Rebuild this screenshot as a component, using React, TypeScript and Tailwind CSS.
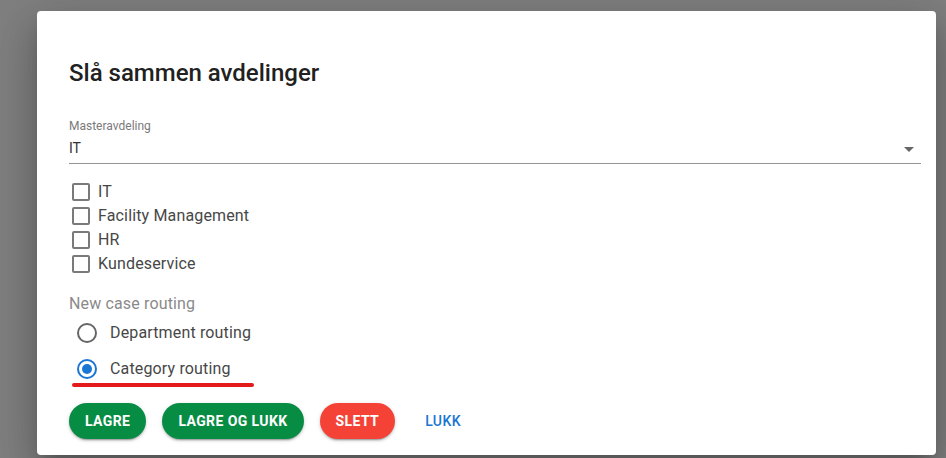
import React, { useState } from "react";

const departments = ["IT", "Facility Management", "HR", "Kundeservice"];

function Checkbox({ label }: { label: string }) {
  return (
    <label className="flex h-6 items-center text-[16px] tracking-[0.15px] text-[#474747]">
      <span className="ml-[3px] mr-[8px] block h-[18px] w-[18px] rounded-[2px] border-2 border-[#7a7a7a]" />
      {label}
    </label>
  );
}

function Radio({ label, checked }: { label: string; checked?: boolean }) {
  return (
    <div className="flex h-9 items-center text-[16px] tracking-[0.15px] text-[#474747]">
      <span
        className={`ml-[8px] mr-[13px] flex h-[20px] w-[20px] items-center justify-center rounded-full border-2 ${
          checked ? "border-[#1976d2]" : "border-[#666666]"
        }`}
      >
        {checked && <span className="block h-[10px] w-[10px] rounded-full bg-[#1976d2]" />}
      </span>
      {label}
    </div>
  );
}

const raised =
  "shadow-[0_3px_1px_-2px_rgba(0,0,0,0.2),0_2px_2px_0_rgba(0,0,0,0.14),0_1px_5px_0_rgba(0,0,0,0.12)]";

export default function App() {
  const [master] = useState("IT");

  return (
    <div
      className="h-[458px] w-full overflow-hidden bg-[#7f7f7f] pl-[37px] pt-[11px]"
      style={{ fontFamily: "Roboto, 'Liberation Sans', sans-serif" }}
    >
      <div className="h-[444px] w-[899px] rounded-[4px] bg-white pl-8 pr-4 pt-[46px] shadow-[0_11px_15px_-7px_rgba(0,0,0,0.2),0_24px_38px_3px_rgba(0,0,0,0.14),0_9px_46px_8px_rgba(0,0,0,0.12)]">
        {/* Title */}
        <h2 className="h-8 text-[24px] font-medium leading-8 text-[#212121]">
          Slå sammen avdelinger
        </h2>

        {/* Master select */}
        <div className="mt-[29px] w-[852px]">
          <div className="text-[12px] leading-4 text-[#7a7a7a]">Masteravdeling</div>
          <div className="mt-[4px] flex h-[26px] items-start justify-between border-b border-[#949494]">
            <span className="text-[14px] leading-5 text-[#333333]">{master}</span>
            <svg className="-mt-[1px] h-6 w-6 text-[#666666]" viewBox="0 0 24 24" fill="currentColor">
              <path d="M7 10l5 5 5-5z" />
            </svg>
          </div>
        </div>

        {/* Departments */}
        <div className="mt-[16px]">
          {departments.map((d) => (
            <Checkbox key={d} label={d} />
          ))}
        </div>

        {/* Routing */}
        <div className="mt-[16px] text-[16px] leading-6 tracking-[0.15px] text-[#8a8a8a]">New case routing</div>
        <div className="-mt-[1px]">
          <Radio label="Department routing" />
          <div className="relative">
            <Radio label="Category routing" checked />
            <div className="absolute left-[3px] top-[32px] h-[4px] w-[182px] rounded-full bg-[#e31b1b]" />
          </div>
        </div>

        {/* Actions */}
        <div className="mt-[16px] flex items-center gap-4 tracking-[0.4px]">
          <button className={`h-9 rounded-full bg-[#078c44] px-4 text-[14px] font-bold text-white ${raised}`}>
            LAGRE
          </button>
          <button className={`h-9 rounded-full bg-[#078c44] px-4 text-[14px] font-bold text-white ${raised}`}>
            LAGRE OG LUKK
          </button>
          <button className={`h-9 rounded-full bg-[#f44336] px-4 text-[14px] font-bold text-white ${raised}`}>
            SLETT
          </button>
          <button className="h-9 px-[14px] text-[14px] font-medium text-[#1976d2]">LUKK</button>
        </div>
      </div>
    </div>
  );
}
